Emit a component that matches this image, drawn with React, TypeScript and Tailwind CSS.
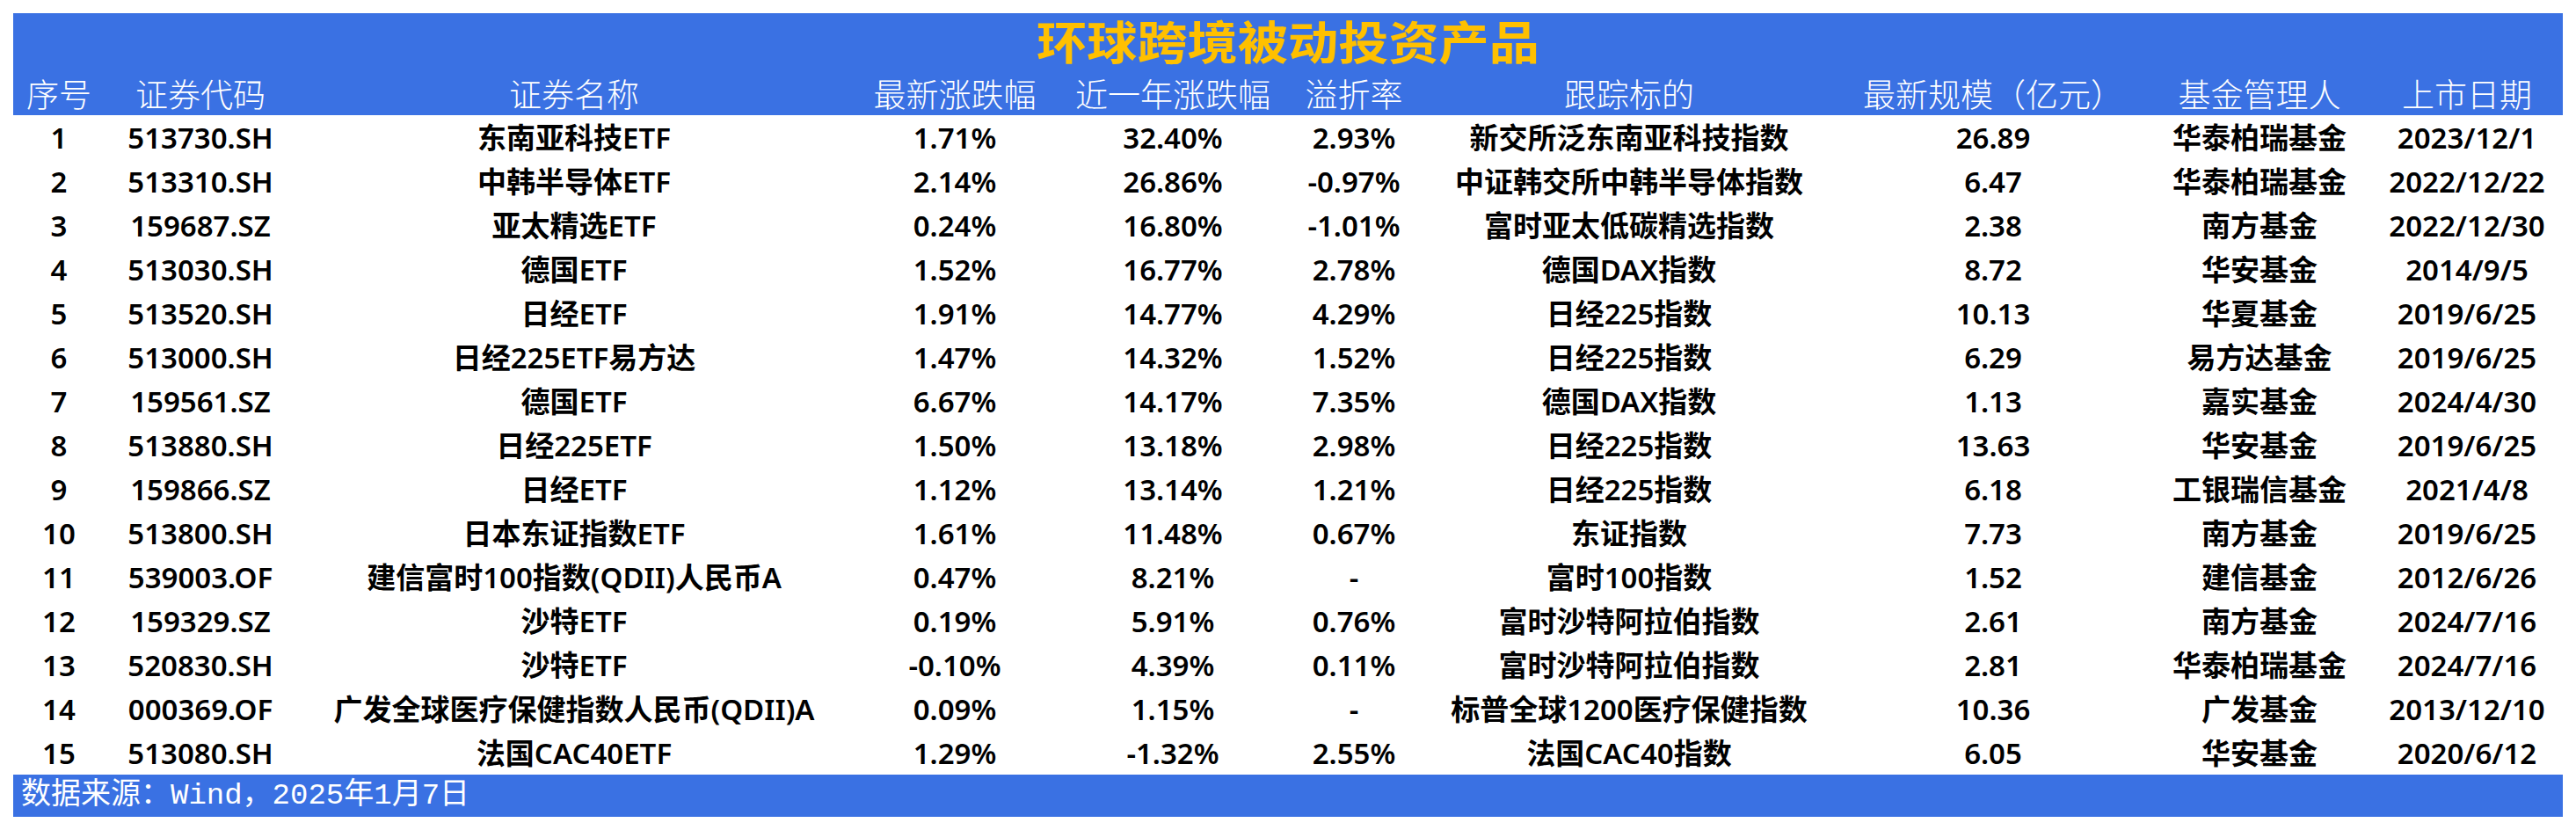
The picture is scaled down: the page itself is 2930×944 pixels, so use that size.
const cols =
  'grid grid-cols-[104px_218px_632px_234px_262px_150px_476px_352px_254px_218px]';

const headers = [
  '序号',
  '证券代码',
  '证券名称',
  '最新涨跌幅',
  '近一年涨跌幅',
  '溢折率',
  '跟踪标的',
  '最新规模（亿元）',
  '基金管理人',
  '上市日期',
];

const rows: string[][] = [
  ['1', '513730.SH', '东南亚科技ETF', '1.71%', '32.40%', '2.93%', '新交所泛东南亚科技指数', '26.89', '华泰柏瑞基金', '2023/12/1'],
  ['2', '513310.SH', '中韩半导体ETF', '2.14%', '26.86%', '-0.97%', '中证韩交所中韩半导体指数', '6.47', '华泰柏瑞基金', '2022/12/22'],
  ['3', '159687.SZ', '亚太精选ETF', '0.24%', '16.80%', '-1.01%', '富时亚太低碳精选指数', '2.38', '南方基金', '2022/12/30'],
  ['4', '513030.SH', '德国ETF', '1.52%', '16.77%', '2.78%', '德国DAX指数', '8.72', '华安基金', '2014/9/5'],
  ['5', '513520.SH', '日经ETF', '1.91%', '14.77%', '4.29%', '日经225指数', '10.13', '华夏基金', '2019/6/25'],
  ['6', '513000.SH', '日经225ETF易方达', '1.47%', '14.32%', '1.52%', '日经225指数', '6.29', '易方达基金', '2019/6/25'],
  ['7', '159561.SZ', '德国ETF', '6.67%', '14.17%', '7.35%', '德国DAX指数', '1.13', '嘉实基金', '2024/4/30'],
  ['8', '513880.SH', '日经225ETF', '1.50%', '13.18%', '2.98%', '日经225指数', '13.63', '华安基金', '2019/6/25'],
  ['9', '159866.SZ', '日经ETF', '1.12%', '13.14%', '1.21%', '日经225指数', '6.18', '工银瑞信基金', '2021/4/8'],
  ['10', '513800.SH', '日本东证指数ETF', '1.61%', '11.48%', '0.67%', '东证指数', '7.73', '南方基金', '2019/6/25'],
  ['11', '539003.OF', '建信富时100指数(QDII)人民币A', '0.47%', '8.21%', '-', '富时100指数', '1.52', '建信基金', '2012/6/26'],
  ['12', '159329.SZ', '沙特ETF', '0.19%', '5.91%', '0.76%', '富时沙特阿拉伯指数', '2.61', '南方基金', '2024/7/16'],
  ['13', '520830.SH', '沙特ETF', '-0.10%', '4.39%', '0.11%', '富时沙特阿拉伯指数', '2.81', '华泰柏瑞基金', '2024/7/16'],
  ['14', '000369.OF', '广发全球医疗保健指数人民币(QDII)A', '0.09%', '1.15%', '-', '标普全球1200医疗保健指数', '10.36', '广发基金', '2013/12/10'],
  ['15', '513080.SH', '法国CAC40ETF', '1.29%', '-1.32%', '2.55%', '法国CAC40指数', '6.05', '华安基金', '2020/6/12'],
];

export default function App() {
  return (
    <div className="w-[2930px] h-[944px] bg-white pt-[15px] pl-[15px]">
      <div className="w-[2900px]">
        {/* blue header block */}
        <div className="bg-[#3a71e3]">
          <div className="h-[72px] flex items-center justify-center">
            <span className="inline-block scale-x-[1.1] text-[52px] leading-none font-bold text-[#ffc000] font-['Liberation_Serif','Noto_Sans_CJK_SC',serif]">
              环球跨境被动投资产品
            </span>
          </div>
          <div className={`${cols} h-[44px] items-center text-white text-[37px] leading-none font-['Liberation_Serif','Noto_Sans_CJK_SC',serif] font-light`}>
            {headers.map((h) => (
              <div key={h} className="text-center whitespace-nowrap">
                {h}
              </div>
            ))}
          </div>
        </div>

        {/* data rows */}
        <div className="font-['Noto_Sans','Noto_Sans_CJK_SC',sans-serif] text-[33px] font-semibold text-black leading-none">
          {rows.map((r) => (
            <div key={r[0]} className={`${cols} h-[50px] items-center`}>
              {r.map((c, i) => (
                <div key={i} className="text-center whitespace-nowrap">
                  {c}
                </div>
              ))}
            </div>
          ))}
        </div>

        {/* source footer */}
        <div className="bg-[#3a71e3] h-[48px] flex items-center px-[9px]">
          <span className="text-white text-[34px] leading-none font-['Liberation_Mono','Noto_Sans_CJK_SC',monospace]">
            数据来源：Wind，2025年1月7日
          </span>
        </div>
      </div>
    </div>
  );
}
